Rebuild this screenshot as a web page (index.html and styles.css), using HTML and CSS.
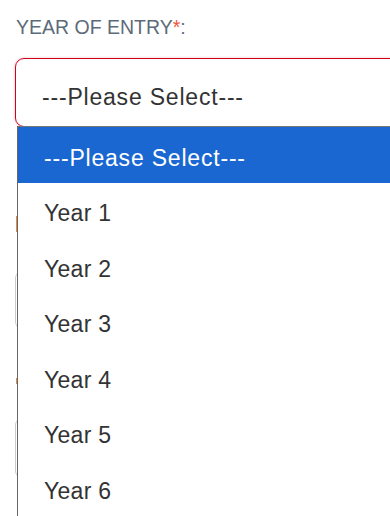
FILE: index.html
```html
<!DOCTYPE html>
<html lang="en">
  <head>
    <meta charset="UTF-8" />
    <meta name="viewport" content="width=device-width, initial-scale=1.0" />
    <title>Year of entry</title>
    <link rel="stylesheet" href="styles.css">
  </head>

  <body>
    <form class="form">
      <div class="field">
        <label class="label">YEAR OF ENTRY<span class="req">*</span>:</label>
        <div class="select-wrap">
          <div class="select">---Please Select---</div>

          <ul class="dropdown">
            <li class="option selected">---Please Select---</li>
            <li class="option">Year 1</li>
            <li class="option">Year 2</li>
            <li class="option">Year 3</li>
            <li class="option">Year 4</li>
            <li class="option">Year 5</li>
            <li class="option">Year 6</li>
          </ul>
        </div>
      </div>

      <!-- fields under the open list, only their left edge shows -->
      <div class="field field-email">
        <div class="hint hint-tall"></div>
        <div class="input input-email"></div>
      </div>

      <div class="field field-phone">
        <div class="hint hint-short"></div>
        <div class="input input-phone"></div>
      </div>
    </form>
  </body>
</html>
```

FILE: styles.css
```css
html {
  overflow: hidden;
}

body {
  margin: 0;
  min-height: 516px;
  overflow: hidden;
  background-color: #ffffff;
  font-family: "Liberation Sans", Arial, sans-serif;
  color: #333333;
}

.form {
  padding: 15px 0 0 15px;
}

.label {
  display: block;
  font-size: 19.5px;
  line-height: 24px;
  color: #5d6a79;
  padding-left: 1px;
}

.req {
  color: #f2533b;
}

.select-wrap {
  position: relative;
  margin-top: 19px;
}

.select {
  box-sizing: border-box;
  width: 420px;
  height: 69px;
  padding: 9px 26px 0 26px;
  display: flex;
  align-items: center;
  border: 1px solid #d0021b;
  border-radius: 9px;
  box-shadow: 0 0 3px rgba(208, 2, 27, 0.25);
  font-size: 23px;
  letter-spacing: 0.8px;
  color: #333333;
}

/* open list of the select, lies over the fields below */
.dropdown {
  position: absolute;
  top: 68px;
  left: 2px;
  width: 420px;
  margin: 0;
  padding: 0;
  list-style: none;
  background-color: #ffffff;
  border-left: 1px solid #666666;
  border-top: 1px solid #777777;
  z-index: 2;
}

.option {
  box-sizing: border-box;
  height: 55.5px;
  padding: 6px 26px 0 26px;
  display: flex;
  align-items: center;
  font-size: 23px;
  letter-spacing: 0.3px;
  color: #333333;
}

.option.selected {
  height: 56px;
  background-color: #1a67d2;
  color: #ffffff;
  letter-spacing: 0.8px;
}

.field-email {
  margin-top: 89px;
}

.hint {
  margin-left: 1px;
  width: 2px;
  background-color: #dc8d4f;
}

.hint-tall {
  height: 16px;
}

.hint-short {
  height: 6px;
}

.input {
  box-sizing: border-box;
  width: 420px;
  height: 58px;
  border: 1px solid #c6cbd2;
  border-radius: 7px;
}

.input-email {
  margin-top: 39px;
}

.field-phone {
  margin-top: 49px;
}

.input-phone {
  margin-top: 34px;
  height: 60px;
}
```
